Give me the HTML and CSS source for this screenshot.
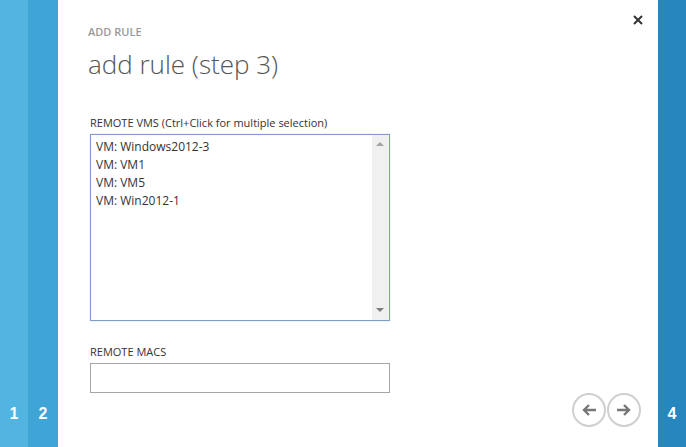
FILE: index.html
```html
<!DOCTYPE html>
<html lang="en">

<head>
    <meta charset="UTF-8">
    <title>Add rule</title>
    <link rel="stylesheet" href="styles.css">
</head>

<body>
<div class="wizard">
    <div class="step step-1"><span>1</span></div>
    <div class="step step-2"><span>2</span></div>

    <div class="panel">
        <button class="close" title="Close">
            <svg width="10" height="10" viewBox="0 0 10 10"><path d="M1 1L9 9M9 1L1 9" stroke="#333" stroke-width="2"/></svg>
        </button>
        <div class="kicker">ADD RULE</div>
        <h1>add rule (step 3)</h1>

        <div class="form-group first">
            <label>REMOTE VMS (Ctrl+Click for multiple selection)</label>
            <div class="listbox">
                <ul class="options">
                    <li>VM: Windows2012-3</li>
                    <li>VM: VM1</li>
                    <li>VM: VM5</li>
                    <li>VM: Win2012-1</li>
                </ul>
                <div class="scrollbar">
                    <span class="arrow up"></span>
                    <span class="arrow down"></span>
                </div>
            </div>
        </div>

        <div class="form-group">
            <label>REMOTE MACS</label>
            <input type="text" class="text-input">
        </div>

        <div class="nav">
            <button class="circle" title="Back">
                <svg width="16" height="14" viewBox="0 0 16 14"><path d="M15 7H3M8 2L3 7L8 12" fill="none" stroke="#777" stroke-width="2.4"/></svg>
            </button>
            <button class="circle" title="Next">
                <svg width="16" height="14" viewBox="0 0 16 14"><path d="M1 7H13M8 2L13 7L8 12" fill="none" stroke="#777" stroke-width="2.4"/></svg>
            </button>
        </div>
    </div>

    <div class="step step-4"><span>4</span></div>
</div>
</body>

</html>
```

FILE: styles.css
```css
body {
    margin: 0;
    font-family: "Open Sans", "Noto Sans", sans-serif;
    color: #333;
}

.wizard {
    display: flex;
    width: 686px;
    height: 447px;
}

.step {
    display: flex;
    align-items: flex-end;
    justify-content: center;
    padding-bottom: 24px;
    box-sizing: border-box;
    color: #fff;
    font-family: "Liberation Sans", Arial, sans-serif;
    font-weight: bold;
    font-size: 16px;
}

.step-1 {
    width: 28px;
    background-color: #51b4e1;
}

.step-2 {
    width: 30px;
    background-color: #3fa5d7;
}

.step-4 {
    width: 28px;
    background-color: #2587bd;
}

.panel {
    position: relative;
    flex: 1;
    background: #fff;
    padding: 24px 0 0 30px;
}

.close {
    position: absolute;
    top: 13px;
    right: 15px;
    border: none;
    background: none;
    padding: 0;
    cursor: pointer;
}

.kicker {
    font-size: 11px;
    font-weight: 600;
    color: #9a9a9a;
}

h1 {
    margin: 7px 0 0;
    font-size: 26px;
    font-weight: 300;
    color: #555;
}

.form-group {
    margin-left: 2px;
    margin-top: 23px;
}

.form-group.first {
    margin-top: 33px;
}

label {
    display: block;
    font-size: 11px;
    margin-bottom: 4px;
}

.listbox {
    display: flex;
    width: 300px;
    height: 187px;
    box-sizing: border-box;
    border: 1px solid #7f9dc8;
    box-shadow: 0 0 1px #a8c0e0;
}

.options {
    list-style: none;
    margin: 0;
    padding: 3px 5px;
    flex: 1;
    font-size: 12px;
    line-height: 18px;
    color: #333;
}

.scrollbar {
    position: relative;
    width: 17px;
    background: #f0f0f0;
}

.arrow {
    position: absolute;
    left: 4px;
    width: 0;
    height: 0;
    border-left: 4px solid transparent;
    border-right: 4px solid transparent;
}

.arrow.up {
    top: 7px;
    border-bottom: 4px solid #a3a3a3;
}

.arrow.down {
    bottom: 8px;
    border-top: 4px solid #7d7d7d;
}

.text-input {
    display: block;
    width: 300px;
    height: 30px;
    box-sizing: border-box;
    border: 1px solid #a5a5a5;
    margin: 0;
}

.nav {
    position: absolute;
    right: 17px;
    bottom: 20px;
    display: flex;
    gap: 1px;
}

.circle {
    width: 34px;
    height: 34px;
    border-radius: 50%;
    border: 2px solid #cfcfcf;
    background: #fff;
    display: flex;
    align-items: center;
    justify-content: center;
    padding: 0;
    cursor: pointer;
}
```
